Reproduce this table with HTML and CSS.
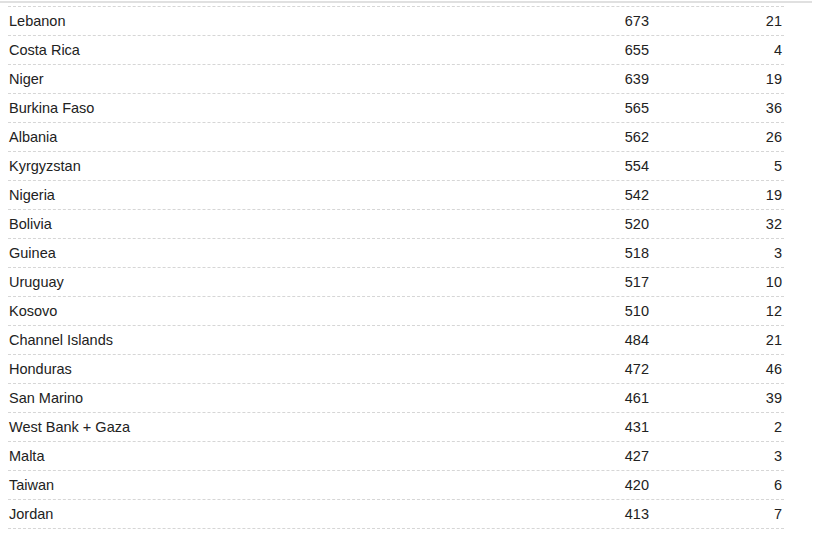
FILE: index.html
```html
<!DOCTYPE html>
<html>
<head>
<meta charset="utf-8">
<link rel="stylesheet" href="styles.css">
</head>
<body>
<div class="topline"></div>
<div class="table">
  <div class="row"><span class="name">Lebanon</span><span class="num">673</span><span class="num2">21</span></div>
  <div class="row"><span class="name">Costa Rica</span><span class="num">655</span><span class="num2">4</span></div>
  <div class="row"><span class="name">Niger</span><span class="num">639</span><span class="num2">19</span></div>
  <div class="row"><span class="name">Burkina Faso</span><span class="num">565</span><span class="num2">36</span></div>
  <div class="row"><span class="name">Albania</span><span class="num">562</span><span class="num2">26</span></div>
  <div class="row"><span class="name">Kyrgyzstan</span><span class="num">554</span><span class="num2">5</span></div>
  <div class="row"><span class="name">Nigeria</span><span class="num">542</span><span class="num2">19</span></div>
  <div class="row"><span class="name">Bolivia</span><span class="num">520</span><span class="num2">32</span></div>
  <div class="row"><span class="name">Guinea</span><span class="num">518</span><span class="num2">3</span></div>
  <div class="row"><span class="name">Uruguay</span><span class="num">517</span><span class="num2">10</span></div>
  <div class="row"><span class="name">Kosovo</span><span class="num">510</span><span class="num2">12</span></div>
  <div class="row"><span class="name">Channel Islands</span><span class="num">484</span><span class="num2">21</span></div>
  <div class="row"><span class="name">Honduras</span><span class="num">472</span><span class="num2">46</span></div>
  <div class="row"><span class="name">San Marino</span><span class="num">461</span><span class="num2">39</span></div>
  <div class="row"><span class="name">West Bank + Gaza</span><span class="num">431</span><span class="num2">2</span></div>
  <div class="row"><span class="name">Malta</span><span class="num">427</span><span class="num2">3</span></div>
  <div class="row"><span class="name">Taiwan</span><span class="num">420</span><span class="num2">6</span></div>
  <div class="row"><span class="name">Jordan</span><span class="num">413</span><span class="num2">7</span></div>
</div>
</body>
</html>
```

FILE: styles.css
```css
html, body {
  margin: 0;
  padding: 0;
  background: #fff;
}
body {
  font-family: "Liberation Sans", Arial, sans-serif;
  font-size: 14.5px;
  color: #222;
  padding-top: 1px;
}
.topline {
  width: 812px;
  height: 2px;
  background: #e0e0e0;
}
.table {
  margin: 3px 0 0 8px;
  width: 776px;
  border-top: 1px dashed #d6d6d6;
}
.row {
  display: grid;
  grid-template-columns: 1fr 100px 135px;
  height: 28px;
  align-items: center;
  border-bottom: 1px dashed #d6d6d6;
}
.name {
  padding-left: 1px;
}
.num {
  text-align: right;
}
.num2 {
  text-align: right;
  padding-right: 2px;
}
```
